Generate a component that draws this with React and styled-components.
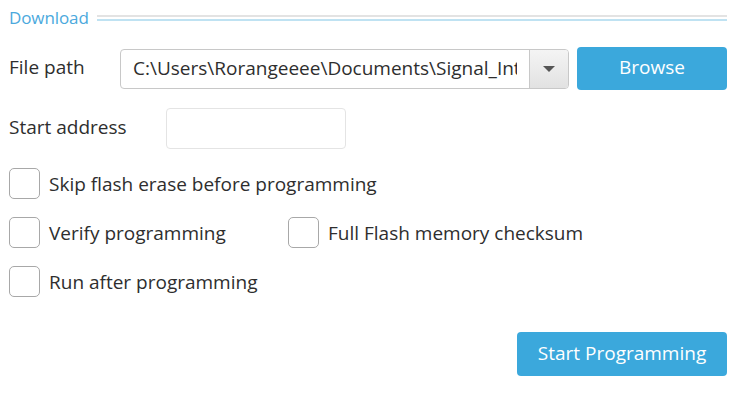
import styled, { createGlobalStyle } from "styled-components";

const GlobalStyle = createGlobalStyle`
    body {
        margin: 0;
        background: #fff;
        font-family: "Open Sans", "Noto Sans", sans-serif;
        color: #2e2e2e;
    }
`

const Panel = styled.div`
    width: 738px;
    height: 396px;
    padding: 6px 11px 0 9px;
    box-sizing: border-box;
    display: flex;
    flex-direction: column;
`

const Legend = styled.div`
    display: flex;
    align-items: center;
    gap: 8px;
    height: 22px;
    span {
        color: #4ba9dd;
        font-size: 17px;
        letter-spacing: -0.1px;
    }
`

const Rule = styled.div`
    flex: 1;
    height: 2px;
    border-top: 2px solid #e3e3e3;
    border-bottom: 2px solid #bfe2f2;
    margin-top: 2px;
`

const Row = styled.div`
    display: flex;
    align-items: center;
    margin-top: ${p => p.$top}px;
`

const Label = styled.div`
    font-size: 19px;
    width: ${p => p.$w}px;
    margin-top: -3px;
`

const Combo = styled.div`
    width: 449px;
    height: 40px;
    box-sizing: border-box;
    border: 1px solid #c8c8c8;
    border-radius: 4px;
    display: flex;
    overflow: hidden;
`

const ComboText = styled.div`
    flex: 1;
    min-width: 0;
    padding: 0 12px;
    margin-top: -2px;
    display: flex;
    align-items: center;
    font-size: 19px;
    white-space: nowrap;
    span {
        overflow: hidden;
    }
`

const Arrow = styled.div`
    width: 38px;
    border-left: 1px solid #c8c8c8;
    background: linear-gradient(#f4f4f4, #e2e2e2);
    display: flex;
    align-items: center;
    justify-content: center;
    &::after {
        content: "";
        border-left: 6px solid transparent;
        border-right: 6px solid transparent;
        border-top: 6px solid #555;
    }
`

const Button = styled.button`
    width: ${p => p.$w}px;
    height: ${p => p.$h}px;
    margin-left: ${p => p.$ml || 0}px;
    padding: 0 0 3px;
    background: #3ba8dc;
    color: #fff;
    border: none;
    border-radius: 4px;
    font-family: inherit;
    font-size: 19px;
`

const TextBox = styled.div`
    width: 180px;
    height: 41px;
    box-sizing: border-box;
    border: 1px solid #e4e4e4;
    border-radius: 4px;
`

const Check = styled.label`
    display: flex;
    align-items: center;
    gap: 9px;
    width: ${p => p.$w ? p.$w + "px" : "auto"};
    font-size: 19px;
    &::before {
        content: "";
        width: 31px;
        height: 31px;
        box-sizing: border-box;
        border: 1px solid #a8a8a8;
        border-radius: 5px;
    }
`

export default function App() {
    return (
        <>
            <GlobalStyle />
            <Panel>
                <Legend><span>Download</span><Rule /></Legend>
                <Row $top={19}>
                    <Label $w={111}>File path</Label>
                    <Combo>
                        <ComboText><span>C:\Users\Rorangeeee\Documents\Signal_Int</span></ComboText>
                        <Arrow />
                    </Combo>
                    <Button $w={150} $h={43} $ml={8}>Browse</Button>
                </Row>
                <Row $top={18}>
                    <Label $w={157}>Start address</Label>
                    <TextBox />
                </Row>
                <Row $top={19}>
                    <Check>Skip flash erase before programming</Check>
                </Row>
                <Row $top={18}>
                    <Check $w={279}>Verify programming</Check>
                    <Check>Full Flash memory checksum</Check>
                </Row>
                <Row $top={18}>
                    <Check>Run after programming</Check>
                </Row>
                <Row $top={35}>
                    <Button $w={210} $h={44} $ml={508}>Start Programming</Button>
                </Row>
            </Panel>
        </>
    )
}
